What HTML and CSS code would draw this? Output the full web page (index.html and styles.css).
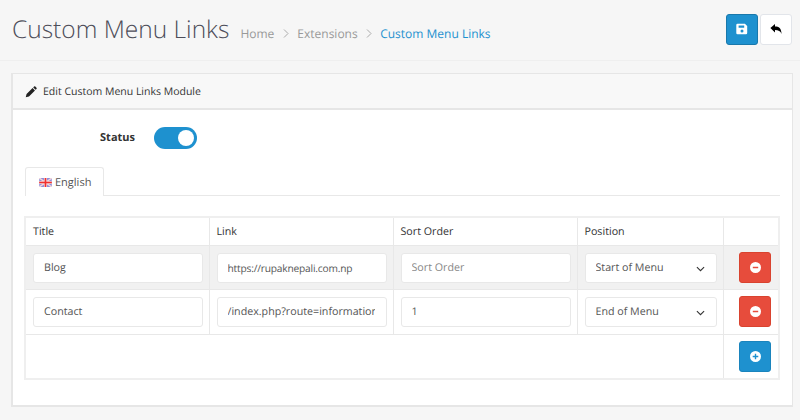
FILE: index.html
```html
<!DOCTYPE html>
<html lang="en">
<head>
<meta charset="utf-8">
<title>Custom Menu Links</title>
<link rel="stylesheet" href="styles.css">
</head>
<body>
<header class="page-header">
  <h1>Custom Menu Links</h1>
  <nav class="crumbs">
    <span>Home</span><i class="sep"><svg width="6" height="9" viewBox="0 0 6 9"><path fill="none" stroke="#aaa" stroke-width="1" d="M1 .5l4 4-4 4"/></svg></i><span>Extensions</span><i class="sep"><svg width="6" height="9" viewBox="0 0 6 9"><path fill="none" stroke="#aaa" stroke-width="1" d="M1 .5l4 4-4 4"/></svg></i><span class="current">Custom Menu Links</span>
  </nav>
  <div class="actions">
    <button class="btn btn-save" type="button" aria-label="Save">
      <svg width="12" height="12" viewBox="0 0 12 12"><path fill="#fff" fill-rule="evenodd" d="M1.500 .8h7.400l2.300 2.300v7a1.200 1.200 0 0 1-1.200 1.200H1.500A1.200 1.200 0 0 1 .3 10.100V2A1.200 1.200 0 0 1 1.500 .8zM2.600 2.400v2.400h5.600V2.400zM6 6.600a1.500 1.500 0 1 0 0 3 1.500 1.500 0 0 0 0-3z"/></svg>
    </button>
    <button class="btn btn-back" type="button" aria-label="Back">
      <svg width="12" height="12" viewBox="0 0 12 12"><path fill="#000" d="M5 1v2.500c3.800 0 6.500 1.800 6.500 7.500-1-3-3-4-6.500-4v2.600L.4 5z"/></svg>
    </button>
  </div>
</header>

<section class="panel">
  <div class="panel-heading">
    <svg width="12" height="12" viewBox="0 0 13 13"><path fill="#222" d="M.8 12.200l.9-3.500 6.500-6.500 2.600 2.600-6.500 6.500zM8.900 1.500l.9-.9a1 1 0 0 1 1.400 0l1.200 1.200a1 1 0 0 1 0 1.400l-.9.900z"/></svg>
    <span>Edit Custom Menu Links Module</span>
  </div>
  <div class="panel-body">
    <div class="status-row">
      <span class="status-label">Status</span>
      <span class="toggle"><span class="knob"></span></span>
    </div>
    <div class="tabs">
      <div class="tab">
        <svg class="flag" width="13" height="9" viewBox="0 0 14 10"><rect width="14" height="10" fill="#8c8edb"/><path stroke="#f3d6da" stroke-width="1.600" d="M0 0l14 10M14 0L0 10"/><path stroke="#f3d6da" stroke-width="3.400" d="M7 0v10M0 5h14"/><path stroke="#f03030" stroke-width="1.800" d="M7 0v10M0 5h14"/></svg>
        <span>English</span>
      </div>
    </div>
    <table class="links">
      <colgroup>
        <col class="c-title"><col class="c-link"><col class="c-sort"><col class="c-pos"><col class="c-act">
      </colgroup>
      <thead>
        <tr><th>Title</th><th>Link</th><th>Sort Order</th><th>Position</th><th></th></tr>
      </thead>
      <tbody>
        <tr class="odd">
          <td><input class="field" type="text" value="Blog"></td>
          <td><input class="field field-url" type="text" value="https://rupaknepali.com.np"></td>
          <td><input class="field" type="text" placeholder="Sort Order"></td>
          <td><div class="select-wrap"><select class="field select"><option>Start of Menu</option></select>
            <svg class="chev" width="9" height="6" viewBox="0 0 10 6"><path fill="none" stroke="#333" stroke-width="1.200" d="M1 .8l4 4 4-4"/></svg></div></td>
          <td class="act"><button class="btn btn-remove" type="button" aria-label="Remove">
            <svg width="11" height="11" viewBox="0 0 11 11"><path fill="#fff" fill-rule="evenodd" d="M5.500 0a5.500 5.500 0 1 1 0 11 5.500 5.500 0 0 1 0-11zM2.800 4.700v1.600h5.400V4.700z"/></svg></button></td>
        </tr>
        <tr>
          <td><input class="field" type="text" value="Contact"></td>
          <td><input class="field" type="text" value="/index.php?route=information/contact"></td>
          <td><input class="field" type="text" value="1"></td>
          <td><div class="select-wrap"><select class="field select"><option>End of Menu</option></select>
            <svg class="chev" width="9" height="6" viewBox="0 0 10 6"><path fill="none" stroke="#333" stroke-width="1.200" d="M1 .8l4 4 4-4"/></svg></div></td>
          <td class="act"><button class="btn btn-remove" type="button" aria-label="Remove">
            <svg width="11" height="11" viewBox="0 0 11 11"><path fill="#fff" fill-rule="evenodd" d="M5.500 0a5.500 5.500 0 1 1 0 11 5.500 5.500 0 0 1 0-11zM2.800 4.700v1.600h5.400V4.700z"/></svg></button></td>
        </tr>
        <tr>
          <td colspan="4"></td>
          <td class="act"><button class="btn btn-add" type="button" aria-label="Add">
            <svg width="11" height="11" viewBox="0 0 11 11"><path fill="#fff" fill-rule="evenodd" d="M5.500 0a5.500 5.500 0 1 1 0 11 5.500 5.500 0 0 1 0-11zM4.800 2.700v2.100H2.700v1.400h2.100v2.100h1.400V6.200h2.100V4.800H6.200V2.700z"/></svg></button></td>
        </tr>
      </tbody>
    </table>
  </div>
</section>
</body>
</html>
```
FILE: styles.css
```css
* { box-sizing: border-box; }
html, body { margin: 0; }
body {
  width: 800px;
  height: 420px;
  overflow: hidden;
  background: #f6f6f6;
  font-family: "Open Sans", "Liberation Sans", sans-serif;
  font-size: 11px;
  color: #333;
  text-rendering: geometricPrecision;
}
.page-header {
  height: 61px;
  padding: 0 8px 0 12px;
  display: flex;
  align-items: center;
  border-bottom: 1px solid #efefef;
}
h1 {
  margin: 0;
  font-size: 24.500px;
  font-weight: 300;
  line-height: 60px;
  color: #4d4d59;
}
.crumbs {
  margin-left: 11px;
  margin-top: 7px;
  display: flex;
  align-items: center;
  font-size: 12px;
  color: #999;
}
.sep {
  display: flex;
  justify-content: center;
  width: 23px;
}
.sep + span + .sep { width: 22.500px; }
.current { color: #1e91cf; }
.actions {
  margin-left: auto;
  display: flex;
  gap: 2px;
  padding-bottom: 2px;
}
.btn {
  display: flex;
  align-items: center;
  justify-content: center;
  padding: 0;
  border-radius: 3px;
  cursor: pointer;
}
.btn-save, .btn-back { width: 32px; height: 31px; }
.btn-save { background: #1e91cf; border: 1px solid #1978ab; }
.btn-back { background: #fff; border: 1px solid #e2e5ea; }
.btn-remove, .btn-add { width: 32px; height: 31px; }
.btn-remove { background: #e74c3c; border: 1px solid #d9432f; }
.btn-add { background: #1e91cf; border: 1px solid #1a84bd; }
.panel {
  margin: 12px 7px 0 11px;
  height: 334px;
  background: #fff;
  border: 2px solid #e6e6e6;
  border-top-width: 1px;
  border-right-width: 1px;
  border-bottom-width: 2px;
}
.panel-heading {
  height: 36px;
  display: flex;
  align-items: center;
  gap: 6px;
  padding: 1px 0 0 12px;
  background: #f8f8f8;
  border-bottom: 2px solid #e6e6e6;
  font-size: 10.500px;
  color: #333;
}
.panel-body { padding: 0 12px; }
.status-row {
  height: 56px;
  display: flex;
  align-items: center;
}
.status-label {
  width: 118px;
  padding-right: 8px;
  text-align: right;
  font-weight: 700;
  font-size: 11px;
  color: #333;
  padding-bottom: 1px;
}
.toggle {
  margin-left: 11px;
  width: 43px;
  height: 22px;
  border-radius: 11px;
  background: #1e91cf;
  display: flex;
  align-items: center;
  justify-content: flex-end;
  padding-right: 3px;
}
.knob {
  width: 16px;
  height: 16px;
  border-radius: 50%;
  background: #fff;
}
.tabs {
  height: 29px;
  border-bottom: 1px solid #e8e8e8;
  display: flex;
  margin-top: 1px;
}
.tab {
  width: 79px;
  height: 29px;
  display: flex;
  align-items: center;
  gap: 3px;
  padding-left: 13px;
  background: #fff;
  border: 1px solid #e8e8e8;
  border-bottom: 0;
  border-radius: 3px 3px 0 0;
  font-size: 11px;
  color: #555;
}
.links {
  margin: 20px 0 0 -1px;
  width: 754px;
  table-layout: fixed;
  border-collapse: collapse;
  border: 2px solid #efefef;
}
.c-title { width: 184px; }
.c-link { width: 184px; }
.c-sort { width: 184px; }
.c-pos { width: 146px; }
.c-act { width: 56px; }
th, td {
  border: 1px solid #e8e8e8;
  padding: 0 6px 0 7px;
  font-size: 10.700px;
}
th {
  height: 28px;
  padding-top: 2px;
  text-align: left;
  font-weight: 400;
  color: #333;
}
tbody tr { height: 44.500px; }
.odd td { background: #f1f1f1; }
.field {
  display: block;
  width: 100%;
  height: 30px;
  margin-top: 1px;
  padding: 0 11px 0 10px;
  background: #fff;
  border: 1px solid #e8e8e8;
  border-radius: 3px;
  font-family: inherit;
  font-size: 10.700px;
  color: #555;
  outline: 0;
  text-rendering: geometricPrecision;
}
.field-url { font-size: 10.200px; letter-spacing: -.19px; }
.field::placeholder { color: #888; opacity: 1; }
.select-wrap { position: relative; }
.select { appearance: none; -webkit-appearance: none; }
.chev {
  position: absolute;
  right: 12px;
  top: 13px;
  pointer-events: none;
}
.act { padding-right: 7px; }
.act .btn { margin: 0 0 0 auto; }
```
